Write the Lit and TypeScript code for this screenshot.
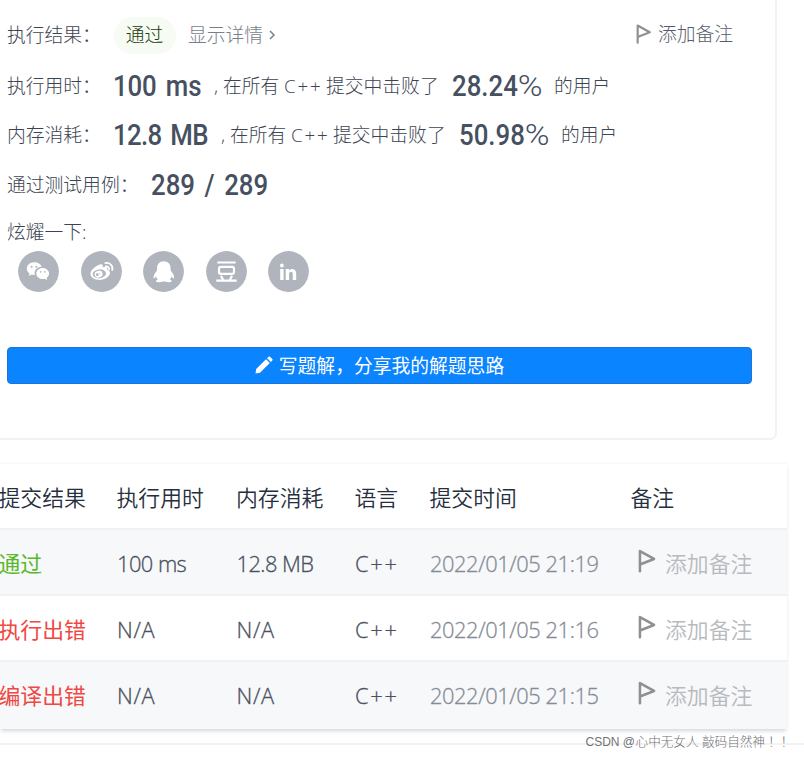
import { LitElement, html, css, svg } from "lit";
import { customElement, property } from "lit/decorators.js";

const GLYPHS: Record<string, unknown> = {
  wechat: svg`
    <path fill="#fff" d="M16.2 11.2c-4.3 0-7.4 2.9-7.4 6.4 0 2 1 3.7 2.7 4.9l-.8 2.6 3-1.5c.8.2 1.6.4 2.5.4h.7c-1.400-4.500 2.300-8.300 6.800-8.200-.7-2.700-3.800-4.600-7.500-4.600z"/>
    <path fill="#fff" d="M24.700 16.900c-3.800 0-6.400 2.600-6.400 5.600s2.800 5.600 6.400 5.600c.8 0 1.500-.1 2.200-.3l2.300 1.400-.6-2.200c1.500-1.100 2.500-2.700 2.500-4.500 0-3.100-2.900-5.600-6.400-5.600z"/>
    <g fill="#afb4bd"><circle cx="13.600" cy="15.800" r="1"/><circle cx="18.400" cy="15.800" r="1"/><circle cx="22.600" cy="20.900" r=".8"/><circle cx="26.800" cy="20.900" r=".8"/></g>`,
  weibo: svg`
    <path fill="#fff" d="M18.200 13.800c1.900-.8 3.400-.6 3.600.8.1.6 0 1.200-.2 1.800 3.400-1.300 5.700-.4 4.600 2.300 2 .6 3.100 1.800 2.700 3.900-.7 3.700-5 6.300-10.100 6.300-5.300 0-9.400-2.300-9.400-6.100 0-3.100 4.300-7.400 8.800-9z"/>
    <ellipse cx="18.300" cy="22.800" rx="6.700" ry="4.400" fill="#afb4bd" transform="rotate(-7 18.300 22.800)"/>
    <ellipse cx="17.600" cy="23.100" rx="4.100" ry="3.400" fill="#fff" transform="rotate(-20 17.600 23.100)"/>
    <circle cx="16.300" cy="23.700" r="1.400" fill="#afb4bd"/><circle cx="18.800" cy="22.500" r=".6" fill="#afb4bd"/>
    <path fill="none" stroke="#fff" stroke-width="1.700" stroke-linecap="round" d="M24.300 12.100c4.500-.9 8 2.400 7 7M24.800 15.300c2.100-.4 3.700 1.200 3.200 3.200"/>`,
  qq: svg`<path fill="#fff" d="M20.800 10.200c-4.300 0-6.800 3-6.800 7v2.200c-1.800 2-3.700 4.800-3.500 7.500.1 1.300 1.500.2 2.500-1.300.3 1.100.9 2.100 1.700 2.900-1.300.5-2 1.200-1.700 1.900.5 1 5.800 1 7.800-.1 2 1.100 7.300 1.100 7.800.1.300-.7-.4-1.400-1.700-1.900.8-.8 1.400-1.800 1.700-2.900 1 1.500 2.400 2.600 2.500 1.300.2-2.700-1.700-5.500-3.500-7.500v-2.200c0-4-2.500-7-6.800-7z"/>`,
  douban: svg`<g fill="none" stroke="#fff"><path stroke-width="2.200" d="M11.300 11.500h18.400M10.300 29.600h20.400M15 24.800l2 4M26 24.800l-2 4"/><rect x="13" y="15.900" width="15" height="6.900" rx="1.800" stroke-width="2.200"/></g>`,
  linkedin: svg`<path fill="#fff" d="M12.200 18.100h3.400v11h-3.400zM13.900 12.600a1.900 1.900 0 1 1 0 3.800 1.900 1.900 0 0 1 0-3.800zM17.700 18.100H21v1.500c1.800-2.800 7.200-2.300 7.200 2.700v6.800h-3.400v-6c0-3.300-3.700-2.900-3.700 0v6h-3.400z"/>`,
};

@customElement("flag-icon")
class FlagIcon extends LitElement {
  static styles = css`
    :host { display: block; flex: none; }
    svg { display: block; width: 100%; height: 100%; }
  `;
  render() {
    return html`<svg viewBox="0 0 18 24" fill="none" stroke="#8f9091" stroke-width="2.600" stroke-linejoin="round" stroke-linecap="round">
      <path d="M2 22.500V1.800L16.500 9.900 2 15.600" />
    </svg>`;
  }
}

@customElement("share-icon")
class ShareIcon extends LitElement {
  @property() name = "";
  static styles = css`
    :host { display: block; width: 41px; height: 41px; }
    svg { display: block; }
  `;
  render() {
    return html`<svg width="41" height="41" viewBox="0 0 41 41">
      <circle cx="20.500" cy="20.500" r="20.400" fill="#afb4bd" />
      ${GLYPHS[this.name]}
    </svg>`;
  }
}

const STATS = [
  { cls: "run", label: "执行用时：", value: "100 ms", beat: "28.24" },
  { cls: "mem", label: "内存消耗：", value: "12.8 MB", beat: "50.98" },
];

const ROWS = [
  { ok: true, status: "通过", time: "100 ms", mem: "12.8 MB", at: "2022/01/05 21:19" },
  { ok: false, status: "执行出错", time: "N/A", mem: "N/A", at: "2022/01/05 21:16" },
  { ok: false, status: "编译出错", time: "N/A", mem: "N/A", at: "2022/01/05 21:15" },
];

@customElement("app-root")
class AppRoot extends LitElement {
  static styles = css`
    :host {
      display: block; position: relative; box-sizing: border-box;
      width: 804px; height: 758px; overflow: hidden; background: #fff;
      font-family: "Open Sans", "Noto Sans CJK SC", sans-serif;
      font-weight: 300; font-size: 18.800px; line-height: 28px; color: #3c4452;
    }
    span { white-space: nowrap; }
    .card {
      box-sizing: border-box; width: 777px; height: 440px; padding: 10px 0 0 7px;
      border: solid #f2f2f3; border-width: 0 2px 2px 0; border-radius: 0 0 7px 0;
    }
    .line { display: flex; align-items: center; height: 50px; }
    .line.run { height: 51px; }
    .line.mem { height: 48px; }
    .line.cases { height: 52px; }
    .line.brag { height: 41px; }
    .label { width: 106px; flex: none; }
    .label.wide { width: 144px; }
    .badge {
      box-sizing: border-box; width: 62px; height: 37px; line-height: 37px; border-radius: 19px; margin-left: 1px;
      background: #f6fbf3; color: #1c3a0c; text-align: center; padding-right: 1px;
    }
    .detail { display: flex; align-items: center; margin-left: 12px; color: #777d8a; }
    .chev { width: 7px; height: 10px; margin-left: 6px; }
    .note { display: flex; align-items: center; margin-left: auto; margin-right: 42px; margin-top: -2px; color: #575c6c; }
    .note flag-icon { width: 15px; height: 20px; margin-right: 7px; }
    .big {
      flex: none; font-family: Roboto, sans-serif; font-weight: 500; font-size: 29px; color: #465060;
      transform: scaleX(0.89); transform-origin: 0 50%; word-spacing: 3.500px;
    }
    .run .value { width: 101px; letter-spacing: -0.200px; }
    .mem .value { width: 108px; letter-spacing: -0.750px; }
    .beat { width: 102px; }
    .pct { display: inline-block; font-weight: 300; transform: scaleX(1.300); transform-origin: 0 50%; }
    .where { width: 70px; flex: none; }
    .lang { width: 42px; flex: none; letter-spacing: 1.800px; }
    .did { width: 126px; flex: none; }
    .icons { display: flex; gap: 21.500px; margin-left: 11px; margin-top: -1px; }
    .write {
      box-sizing: border-box; display: flex; align-items: center; justify-content: center;
      width: 745px; height: 37px; margin-top: 55px; border: 1px solid #1b76d8; border-radius: 4px;
      background: #0a84ff; color: #fff; font-weight: 400; padding-top: 1px;
    }
    .pencil { width: 18px; height: 18px; margin: -2px 6px 0 0; }
    .table {
      box-sizing: border-box; width: 787px; height: 267px; margin-top: 22px;
      border-top: 2px solid #fafafa; font-size: 21.850px; font-weight: 350;
      box-shadow: 0 3px 4px -1px rgba(0, 0, 0, 0.16);
    }
    .tr {
      box-sizing: border-box; height: 66px; display: grid; align-items: center;
      grid-template-columns: 117px 119.500px 118.500px 75px 201px 1fr;
      border-bottom: 2px solid #f0f1f2; padding-top: 4px;
    }
    .tr.head { padding-top: 3px; color: #262f3d; }
    .tr.head span { margin-left: -0.500px; }
    .tr.head span:first-child { margin-left: -1.500px; }
    .tr.alt { background: #f6f8fa; }
    .tr:last-child { border-bottom: 0; height: 67px; padding-bottom: 4px; }
    .st { margin-left: -1.500px; font-weight: 400; color: #5ab82a; }
    .st.bad { color: #ef4743; }
    .val, .na { color: #4a505d; -webkit-text-stroke: 0.300px #4a505d; }
    .val { letter-spacing: -0.550px; }
    .na { letter-spacing: 0.700px; }
    .lg { letter-spacing: 1.800px; }
    .at { color: #868c96; letter-spacing: -0.430px; -webkit-text-stroke: 0.300px #868c96; }
    .add { display: flex; align-items: center; color: #b8babe; padding-left: 7px; }
    .add flag-icon { width: 17.500px; height: 24px; margin-right: 9.500px; margin-top: -6px; }
    .rule { height: 2px; margin-top: 14px; background: #f3f3f3; }
    .mark {
      position: absolute; left: 585.500px; top: 731px; font-size: 12.600px; line-height: 20px; white-space: nowrap;
      color: #707275; font-family: "Liberation Sans", "Noto Sans CJK SC", sans-serif;
    }
    .mark .latin { font-size: 12px; margin-right: 0.500px; }
    .mark .bang { font-family: "Noto Sans CJK TC", sans-serif; }
  `;

  render() {
    return html`
      <div class="card">
        <div class="line">
          <span class="label">执行结果：</span><span class="badge">通过</span>
          <span class="detail">显示详情<svg class="chev" viewBox="0 0 7 10" fill="none" stroke="#7b818e" stroke-width="1.500"><path d="M1 1l4 4-4 4" /></svg></span>
          <span class="note"><flag-icon></flag-icon>添加备注</span>
        </div>
        ${STATS.map((s) => html`
          <div class="line ${s.cls}">
            <span class="label">${s.label}</span><span class="big value">${s.value}</span>
            <span class="where">, 在所有</span><span class="lang">C++</span><span class="did">提交中击败了</span>
            <span class="big beat">${s.beat}<span class="pct">%</span></span><span>的用户</span>
          </div>`)}
        <div class="line cases"><span class="label wide">通过测试用例：</span><span class="big">289 / 289</span></div>
        <div class="line brag">炫耀一下:</div>
        <div class="icons">${Object.keys(GLYPHS).map((n) => html`<share-icon name=${n}></share-icon>`)}</div>
        <div class="write"><svg class="pencil" viewBox="0 0 18 18" fill="#fff"><path d="M.5 17.500l.7-4.500L11 3.200l3.800 3.800L5 16.800zM12 2.200L13.500.7q.7-.6 1.400 0l2.400 2.400q.7.700 0 1.400L15.800 6z" /></svg>写题解，分享我的解题思路</div>
      </div>
      <div class="table">
        <div class="tr head"><span>提交结果</span><span>执行用时</span><span>内存消耗</span><span>语言</span><span>提交时间</span><span>备注</span></div>
        ${ROWS.map((r, i) => html`<div class="tr ${i % 2 ? "" : "alt"}"><span class="st ${r.ok ? "" : "bad"}">${r.status}</span><span class=${r.ok ? "val" : "na"}>${r.time}</span><span class=${r.ok ? "val" : "na"}>${r.mem}</span><span class="na lg">C++</span><span class="at">${r.at}</span><span class="add"><flag-icon></flag-icon>添加备注</span></div>`)}
      </div>
      <div class="rule"></div>
      <div class="mark"><span class="latin">CSDN @</span>心中无女人 敲码自然神<span class="bang" lang="zh-Hant">！！</span></div>
    `;
  }
}
